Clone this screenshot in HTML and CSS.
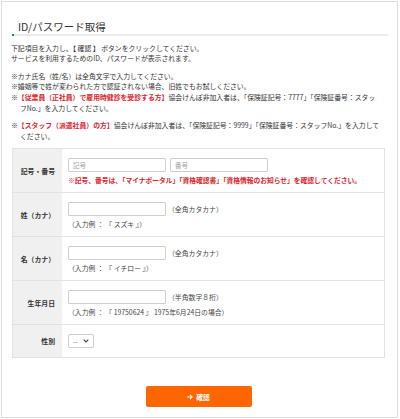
FILE: index.html
```html
<!DOCTYPE html>
<html lang="ja">
<head>
<meta charset="utf-8">
<title>ID/パスワード取得</title>
<link rel="stylesheet" href="styles.css">
</head>
<body>
<div class="card">
  <h1 class="title">ID/パスワード取得</h1>
  <div class="title-bar"></div>

  <p class="intro">下記項目を入力し、【 確認 】 ボタンをクリックしてください。<br>サービスを利用するためのID、パスワードが表示されます。</p>

  <ul class="notes">
    <li>※カナ氏名（姓/名）は全角文字で入力してください。</li>
    <li>※婚姻等で姓が変わられた方で認証されない場合、旧姓でもお試しください。</li>
    <li>※<span class="red">【従業員（正社員）で雇用時健診を受診する方】</span>協会けんぽ非加入者は、「保険証記号：7777」「保険証番号：スタッ<br>フNo.」を入力してください。</li>
  </ul>
  <ul class="notes notes-2">
    <li>※<span class="red">【スタッフ（派遣社員）の方】</span>協会けんぽ非加入者は、「保険証記号：9999」「保険証番号：スタッフNo.」を入力して<br>ください。</li>
  </ul>

  <table class="form">
    <tr>
      <th>記号・番号</th>
      <td>
        <div class="line">
          <input class="field" type="text" placeholder="記号">
          <input class="field" type="text" placeholder="番号">
        </div>
        <div class="warn">※記号、番号は、「マイナポータル」「資格確認書」「資格情報のお知らせ」を確認してください。</div>
      </td>
    </tr>
    <tr>
      <th>姓（カナ）</th>
      <td>
        <div class="line">
          <input class="field" type="text">
          <span class="hint">（全角カタカナ）</span>
        </div>
        <div class="example">（入力例 ： 『 スズキ 』）</div>
      </td>
    </tr>
    <tr>
      <th>名（カナ）</th>
      <td>
        <div class="line">
          <input class="field" type="text">
          <span class="hint">（全角カタカナ）</span>
        </div>
        <div class="example">（入力例 ： 『 イチロー 』）</div>
      </td>
    </tr>
    <tr>
      <th>生年月日</th>
      <td>
        <div class="line">
          <input class="field" type="text">
          <span class="hint">（半角数字８桁）</span>
        </div>
        <div class="example">（入力例 ： 『 19750624 』 1975年6月24日の場合）</div>
      </td>
    </tr>
    <tr class="last">
      <th>性別</th>
      <td>
        <div class="select-wrap">
          <select class="select"><option>--</option><option>男性</option><option>女性</option></select>
          <svg class="chev" width="6" height="4" viewBox="0 0 6 4"><path d="M0.7 0.7 L3 3 L5.3 0.7" fill="none" stroke="#444" stroke-width="1.1"/></svg>
        </div>
      </td>
    </tr>
  </table>

  <div class="actions">
    <button class="submit" type="button">
      <svg width="6" height="6" viewBox="0 0 6 6"><path d="M0.3 3 H5 M3 0.9 L5.1 3 L3 5.1" fill="none" stroke="#fff" stroke-width="1.2"/></svg>
      <span>確認</span>
    </button>
  </div>
</div>
</body>
</html>
```

FILE: styles.css
```css
html, body {
  margin: 0;
  padding: 0;
  background: #fff;
}
body {
  width: 400px;
  height: 419px;
  overflow: hidden;
  font-family: "Noto Sans CJK JP", "Noto Sans", sans-serif;
  color: #333;
  font-size: 6.85px;
}
.card {
  box-sizing: border-box;
  margin: 1px 2px 1px 1px;
  width: 397px;
  height: 417px;
  border: 1px solid #dcdcdc;
  padding: 17px 12px 0 9px;
}
.title {
  margin: 0 0 0 1px;
  padding-left: 6px;
  font-size: 10.5px;
  line-height: 15px;
  font-weight: 400;
  color: #333;
}
.title-bar {
  height: 2px;
  margin: 0 -3px 0 1px;
  background:
    linear-gradient(#1f8f2a, #1f8f2a) left top / 2px 2px no-repeat,
    #ebebeb;
}
.intro {
  margin: 6.5px 0 0;
  line-height: 10.8px;
}
.notes {
  list-style: none;
  margin: 6.5px 0 0;
  padding: 0;
  line-height: 10.8px;
}
.notes li {
  padding-left: 9px;
  text-indent: -9px;
  white-space: nowrap;
}
.red {
  color: #d9252c;
  font-weight: 700;
}
.form {
  margin: 6.5px 0 0 1px;
  width: 373px;
  border-collapse: collapse;
  border: 1px solid #e2e2e2;
}
.form tr {
  border-top: 1px solid #e2e2e2;
}
.form th {
  width: 42px;
  background: #f0f0f0;
  text-align: right;
  padding: 0 7px 0 0;
  font-weight: 700;
  color: #333;
  vertical-align: middle;
  white-space: nowrap;
}
.form td {
  padding: 9px 6px 6px;
  vertical-align: top;
}
.form tr.last td {
  padding-bottom: 9px;
}
.line {
  display: flex;
  align-items: center;
  gap: 4px;
  height: 14px;
}
.field {
  box-sizing: border-box;
  width: 98px;
  height: 14px;
  margin: 0;
  border: 1px solid #cfcfcf;
  border-radius: 1px;
  padding: 0 4px;
  font-family: inherit;
  font-size: 6.5px;
  color: #333;
  background: #fff;
}
.field::placeholder {
  color: #a0a0a0;
}
.hint {
  margin-left: -2px;
  color: #444;
}
.warn {
  margin-top: 3px;
  line-height: 11px;
  color: #d9252c;
  font-weight: 700;
  font-size: 6.75px;
  white-space: nowrap;
}
.example {
  margin-top: 3px;
  line-height: 11px;
  color: #444;
}
.select-wrap {
  position: relative;
  width: 26px;
  height: 14px;
}
.select {
  appearance: none;
  -webkit-appearance: none;
  box-sizing: border-box;
  width: 26px;
  height: 14px;
  margin: 0;
  border: 1px solid #cfcfcf;
  border-radius: 2px;
  background: #fff;
  padding: 0 0 0 4px;
  font-family: inherit;
  font-size: 6.5px;
  color: #666;
}
.chev {
  position: absolute;
  right: 5px;
  top: 5px;
  pointer-events: none;
}
.actions {
  display: flex;
  justify-content: center;
  margin-top: 28px;
}
.submit {
  display: flex;
  align-items: center;
  justify-content: center;
  gap: 3px;
  width: 106px;
  height: 21px;
  margin: 0 0 0 1px;
  padding: 0;
  border: none;
  border-radius: 2px;
  background: #ff6600;
  color: #fff;
  font-family: inherit;
  font-size: 6.85px;
  font-weight: 700;
}
```
